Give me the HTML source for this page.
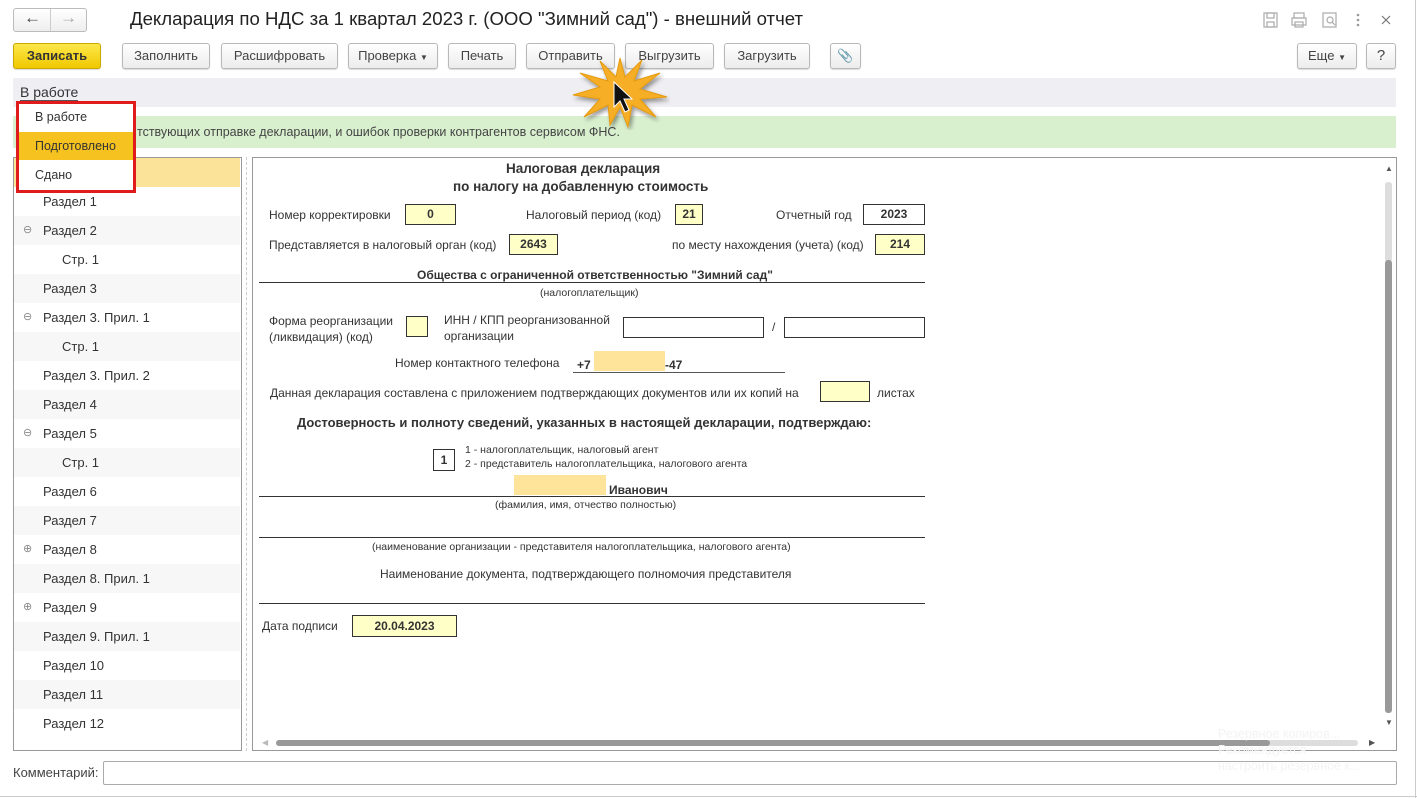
<!DOCTYPE html>
<html><head><meta charset="utf-8"><style>
*{box-sizing:border-box;margin:0;padding:0}
body{width:1417px;height:798px;background:#fff;font-family:"Liberation Sans",Arial,sans-serif;font-size:13px;color:#333;position:relative;overflow:hidden}
.a{position:absolute}
.btn{position:absolute;top:43px;height:26px;border:1px solid #b8b8b8;border-radius:3px;background:linear-gradient(#fff,#ececec);box-shadow:0 1px 1px rgba(0,0,0,.15);font-size:13px;color:#444;text-align:center;line-height:24px}
.t{position:absolute;font-size:12px;color:#333;white-space:nowrap}
.b{font-weight:bold}
.box{position:absolute;border:1px solid #333;background:#ffffc8;font-size:12px;font-weight:bold;text-align:center;line-height:19px;height:21px}
.w{background:#fff}
.row{position:absolute;left:14px;width:226px;height:29px;font-size:13px;color:#333;line-height:29px}
.ln{position:absolute;height:1px;background:#333}
</style></head><body>
<div class="a" style="right:1px;top:0;width:1px;height:798px;background:#ccc"></div>
<div class="a" style="left:0;bottom:1px;width:1417px;height:1px;background:#ccc"></div>
<!-- nav -->
<div class="a" style="left:13px;top:8px;width:74px;height:24px;border:1px solid #bbb;border-radius:3px;background:linear-gradient(#fff,#eee)"></div>
<div class="a" style="left:50px;top:9px;width:1px;height:22px;background:#ccc"></div>
<div class="a" style="left:24px;top:8px;font-size:17px;color:#444">&#8592;</div>
<div class="a" style="left:60px;top:8px;font-size:17px;color:#aaa">&#8594;</div>
<div class="a" style="left:130px;top:8px;font-size:18.6px;color:#222">Декларация по НДС за 1 квартал 2023 г. (ООО "Зимний сад") - внешний отчет</div>
<!-- right icons -->
<svg class="a" style="left:1262px;top:11px" width="130" height="18"><g fill="none" stroke="#aaa" stroke-width="1.2"><rect x="2" y="2" width="13" height="14"/><rect x="5" y="2" width="7" height="5"/><rect x="5" y="11" width="7" height="5"/><rect x="32" y="2" width="10" height="5"/><rect x="30" y="7" width="14" height="7"/><rect x="33" y="11" width="8" height="5"/><rect x="61" y="2" width="13" height="14"/><circle cx="68" cy="9" r="3"/><line x1="70" y1="11" x2="73" y2="14"/></g><g fill="#999"><circle cx="96" cy="4" r="1.3"/><circle cx="96" cy="9" r="1.3"/><circle cx="96" cy="14" r="1.3"/></g><path d="M120 5l8 8M128 5l-8 8" stroke="#777" stroke-width="1.2"/></svg>
<!-- toolbar -->
<div class="btn b" style="left:13px;width:88px;background:linear-gradient(#fde84a,#f0c800);border-color:#c9a800;color:#333">Записать</div>
<div class="btn" style="left:122px;width:88px">Заполнить</div>
<div class="btn" style="left:221px;width:117px">Расшифровать</div>
<div class="btn" style="left:348px;width:90px">Проверка <span style="font-size:8px">▼</span></div>
<div class="btn" style="left:448px;width:68px">Печать</div>
<div class="btn" style="left:526px;width:89px">Отправить</div>
<div class="btn" style="left:625px;width:89px">Выгрузить</div>
<div class="btn" style="left:724px;width:86px">Загрузить</div>
<div class="btn" style="left:830px;width:31px;color:#777">&#128206;</div>
<div class="btn" style="left:1297px;width:60px">Еще <span style="font-size:8px">▼</span></div>
<div class="btn" style="left:1366px;width:30px;font-size:15px">?</div>
<!-- gray status bar -->
<div class="a" style="left:13px;top:78px;width:1383px;height:29px;background:#efeef2"></div>
<div class="a" style="left:20px;top:84px;font-size:14px;color:#333;border-bottom:1px solid #555;line-height:16px">В работе</div>
<!-- green -->
<div class="a" style="left:13px;top:116px;width:1383px;height:32px;background:#d9f0cf"></div>
<div class="a" style="left:137px;top:125px;font-size:12.5px;color:#444">тствующих отправке декларации, и ошибок проверки контрагентов сервисом ФНС.</div>
<!-- left tree -->
<div class="a" style="left:13px;top:157px;width:229px;height:594px;border:1px solid #999"></div>
<div class="a" style="left:246px;top:157px;width:1px;height:594px;border-left:1px dashed #ccc"></div>
<div class="row" style="top:158px;background:#fbe49a"></div>
<div class="row" style="top:187px;padding-left:29px">Раздел 1</div>
<div class="row" style="top:216px;padding-left:29px;background:#f7f7f8"><span class="a" style="left:9px;color:#888;font-size:11px">⊖</span>Раздел 2</div>
<div class="row" style="top:245px;padding-left:48px">Стр. 1</div>
<div class="row" style="top:274px;padding-left:29px;background:#f7f7f8">Раздел 3</div>
<div class="row" style="top:303px;padding-left:29px"><span class="a" style="left:9px;color:#888;font-size:11px">⊖</span>Раздел 3. Прил. 1</div>
<div class="row" style="top:332px;padding-left:48px;background:#f7f7f8">Стр. 1</div>
<div class="row" style="top:361px;padding-left:29px">Раздел 3. Прил. 2</div>
<div class="row" style="top:390px;padding-left:29px;background:#f7f7f8">Раздел 4</div>
<div class="row" style="top:419px;padding-left:29px"><span class="a" style="left:9px;color:#888;font-size:11px">⊖</span>Раздел 5</div>
<div class="row" style="top:448px;padding-left:48px;background:#f7f7f8">Стр. 1</div>
<div class="row" style="top:477px;padding-left:29px">Раздел 6</div>
<div class="row" style="top:506px;padding-left:29px;background:#f7f7f8">Раздел 7</div>
<div class="row" style="top:535px;padding-left:29px"><span class="a" style="left:9px;color:#888;font-size:11px">⊕</span>Раздел 8</div>
<div class="row" style="top:564px;padding-left:29px;background:#f7f7f8">Раздел 8. Прил. 1</div>
<div class="row" style="top:593px;padding-left:29px"><span class="a" style="left:9px;color:#888;font-size:11px">⊕</span>Раздел 9</div>
<div class="row" style="top:622px;padding-left:29px;background:#f7f7f8">Раздел 9. Прил. 1</div>
<div class="row" style="top:651px;padding-left:29px">Раздел 10</div>
<div class="row" style="top:680px;padding-left:29px;background:#f7f7f8">Раздел 11</div>
<div class="row" style="top:709px;padding-left:29px">Раздел 12</div>
<!-- right panel -->
<div class="a" style="left:252px;top:157px;width:1145px;height:594px;border:1px solid #999"></div>
<div class="a" style="left:1385px;top:164px;font-size:8px;color:#555">▲</div>
<div class="a" style="left:1385px;top:182px;width:7px;height:80px;background:#ddd;border-radius:3px"></div>
<div class="a" style="left:1385px;top:260px;width:7px;height:453px;background:#999;border-radius:3px"></div>
<div class="a" style="left:1385px;top:718px;font-size:8px;color:#555">▼</div>
<div class="a" style="left:262px;top:738px;font-size:8px;color:#bbb">◀</div>
<div class="a" style="left:276px;top:740px;width:1082px;height:6px;background:#ddd;border-radius:3px"></div>
<div class="a" style="left:276px;top:740px;width:994px;height:6px;background:#999;border-radius:3px"></div>
<div class="a" style="left:1369px;top:738px;font-size:8px;color:#555">▶</div>
<!-- form -->
<div class="t b" style="left:506px;top:161px;font-size:13.5px">Налоговая декларация</div>
<div class="t b" style="left:453px;top:179px;font-size:13.5px">по налогу на добавленную стоимость</div>
<div class="t" style="left:269px;top:208px">Номер корректировки</div>
<div class="box" style="left:405px;top:204px;width:51px">0</div>
<div class="t" style="left:526px;top:208px">Налоговый период (код)</div>
<div class="box" style="left:675px;top:204px;width:28px">21</div>
<div class="t" style="left:776px;top:208px">Отчетный год</div>
<div class="box w" style="left:863px;top:204px;width:62px">2023</div>
<div class="t" style="left:269px;top:238px">Представляется в налоговый орган (код)</div>
<div class="box" style="left:509px;top:234px;width:49px">2643</div>
<div class="t" style="left:672px;top:238px">по месту нахождения (учета) (код)</div>
<div class="box" style="left:875px;top:234px;width:50px">214</div>
<div class="t b" style="left:417px;top:268px">Общества с ограниченной ответственностью "Зимний сад"</div>
<div class="ln" style="left:259px;top:282px;width:666px"></div>
<div class="t" style="left:540px;top:287px;font-size:10.5px">(налогоплательщик)</div>
<div class="t" style="left:269px;top:313px;line-height:16px">Форма реорганизации<br>(ликвидация) (код)</div>
<div class="box" style="left:406px;top:316px;width:22px"></div>
<div class="t" style="left:444px;top:312px;line-height:16px">ИНН / КПП реорганизованной<br>организации</div>
<div class="box w" style="left:623px;top:317px;width:141px"></div>
<div class="t" style="left:772px;top:320px">/</div>
<div class="box w" style="left:784px;top:317px;width:141px"></div>
<div class="t" style="left:395px;top:356px">Номер контактного телефона</div>
<div class="a" style="left:594px;top:351px;width:71px;height:20px;background:#fde49a"></div>
<div class="t b" style="left:577px;top:358px">+7</div>
<div class="t b" style="left:665px;top:358px">-47</div>
<div class="ln" style="left:573px;top:372px;width:212px;background:#555"></div>
<div class="t" style="left:270px;top:386px">Данная декларация составлена с приложением подтверждающих документов или их копий на</div>
<div class="box" style="left:820px;top:381px;width:50px"></div>
<div class="t" style="left:877px;top:386px">листах</div>
<div class="t b" style="left:297px;top:415px;font-size:13px">Достоверность и полноту сведений, указанных в настоящей декларации, подтверждаю:</div>
<div class="box w" style="left:433px;top:449px;width:22px;height:22px;line-height:20px">1</div>
<div class="t" style="left:465px;top:444px;font-size:10.5px">1 - налогоплательщик, налоговый агент</div>
<div class="t" style="left:465px;top:458px;font-size:10.5px">2 - представитель налогоплательщика, налогового агента</div>
<div class="a" style="left:514px;top:475px;width:92px;height:20px;background:#fde49a"></div>
<div class="t b" style="left:609px;top:483px">Иванович</div>
<div class="ln" style="left:259px;top:496px;width:666px"></div>
<div class="t" style="left:495px;top:499px;font-size:10.5px">(фамилия, имя, отчество полностью)</div>
<div class="ln" style="left:259px;top:537px;width:666px"></div>
<div class="t" style="left:372px;top:541px;font-size:10.5px">(наименование организации - представителя налогоплательщика, налогового агента)</div>
<div class="t" style="left:380px;top:567px">Наименование документа, подтверждающего полномочия представителя</div>
<div class="ln" style="left:259px;top:603px;width:666px"></div>
<div class="t" style="left:262px;top:619px">Дата подписи</div>
<div class="box" style="left:352px;top:615px;width:105px;height:22px;line-height:20px">20.04.2023</div>
<!-- comment -->
<div class="a" style="left:13px;top:765px;font-size:13px;color:#444">Комментарий:</div>
<div class="a" style="left:103px;top:761px;width:1294px;height:24px;border:1px solid #aaa;border-radius:2px"></div>
<!-- faded notification -->
<div class="a" style="left:1218px;top:726px;font-size:12.5px;color:#f3f3f3;line-height:16px">Резервное копиров...<br>Рекомендуется<br>настроить резервное к...</div>
<!-- dropdown -->
<div class="a" style="left:16px;top:101px;width:120px;height:92px;border:3px solid #e01b1b;background:#fff"></div>
<div class="a" style="left:19px;top:132px;width:114px;height:28px;background:#f5c21f"></div>
<div class="a" style="left:35px;top:110px;font-size:12.5px;color:#333">В работе</div>
<div class="a" style="left:35px;top:139px;font-size:12.5px;color:#333">Подготовлено</div>
<div class="a" style="left:35px;top:168px;font-size:12.5px;color:#333">Сдано</div>
<!-- starburst + cursor -->
<svg class="a" style="left:570px;top:55px" width="100" height="75"><defs><filter id="s"><feDropShadow dx="2" dy="3" stdDeviation="2" flood-opacity=".4"/></filter></defs>
<polygon filter="url(#s)" fill="#f5ae25" stroke="#e59a10" points="50,3 55,22 72,5 64,26 90,18 70,34 97,42 70,44 86,62 62,50 58,72 50,52 40,70 38,50 14,62 30,44 3,40 30,32 10,18 38,26 30,6 46,22"/>
<path d="M44 27 L44 52 L50 46 L55 57 L59 55 L54 44 L62 44 Z" fill="#111" stroke="#fff" stroke-width="1"/></svg>
</body></html>
